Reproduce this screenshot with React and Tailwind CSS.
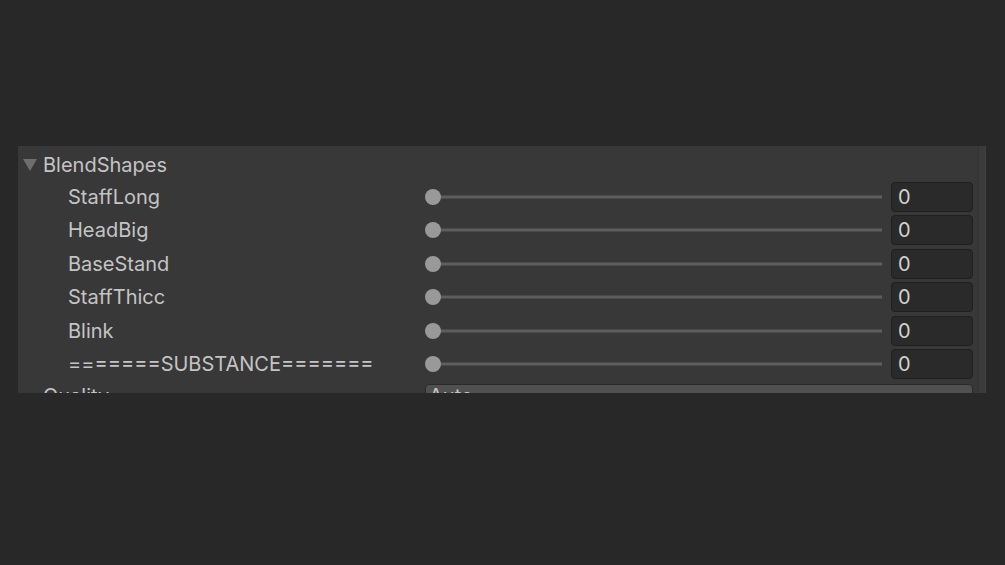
import React from "react";

const rows = ["StaffLong", "HeadBig", "BaseStand", "StaffThicc", "Blink", "=======SUBSTANCE======="];

function Row({ label }) {
  return (
    <div className="flex items-center h-[33.4px] shrink-0">
      <div className="w-[407px] pl-[50px] text-[20px] text-[#c4c4c4] leading-none whitespace-nowrap">{label}</div>
      <div className="relative flex-1 h-full flex items-center">
        <div className="absolute left-[7px] right-[0px] h-[3px] bg-[#5e5e5e] top-1/2 -translate-y-1/2" />
        <div className="relative w-[16px] h-[16px] rounded-full bg-[#999999]" />
      </div>
      <div className="ml-[9px] w-[82px] h-[30px] rounded-[4px] bg-[#2a2a2a] border border-[#1f1f1f] flex items-center pl-[6px] text-[20px] text-[#d2d2d2]">0</div>
    </div>
  );
}

export default function App() {
  return (
    <div className="w-[1005px] h-[565px] bg-[#282828] pt-[146px] pl-[18px]" style={{ fontFamily: "Inter, 'Noto Sans', sans-serif" }}>
      <div className="w-[968px] h-[247px] bg-[#383838] flex overflow-hidden">
        <div className="flex-1 flex flex-col pr-[5px]">
          <div className="h-[34.3px] shrink-0 pt-[4px] flex items-center pl-[5px]">
            <svg width="14" height="12" viewBox="0 0 14 12" className="mr-[6px]">
              <path d="M0 0 L14 0 L7 12 Z" fill="#6e6e6e" />
            </svg>
            <span className="text-[20px] text-[#c4c4c4] leading-none">BlendShapes</span>
          </div>
          {rows.map((r) => (
            <Row key={r} label={r} />
          ))}
          <div className="flex items-start mt-[3px] shrink-0">
            <div className="w-[407px] pl-[25px] text-[20px] text-[#c4c4c4] leading-none pt-[2px]">Quality</div>
            <div className="w-[548px] h-[30px] rounded-[4px] bg-[#505050] border border-[#2a2a2a] text-[20px] text-[#c4c4c4] pl-[3px] pt-[1px] leading-none">Auto</div>
          </div>
        </div>
        <div className="w-[8px] h-full bg-[#3b3b3b] border-l border-[#353535] border-r border-r-[#404040]" />
      </div>
    </div>
  );
}
